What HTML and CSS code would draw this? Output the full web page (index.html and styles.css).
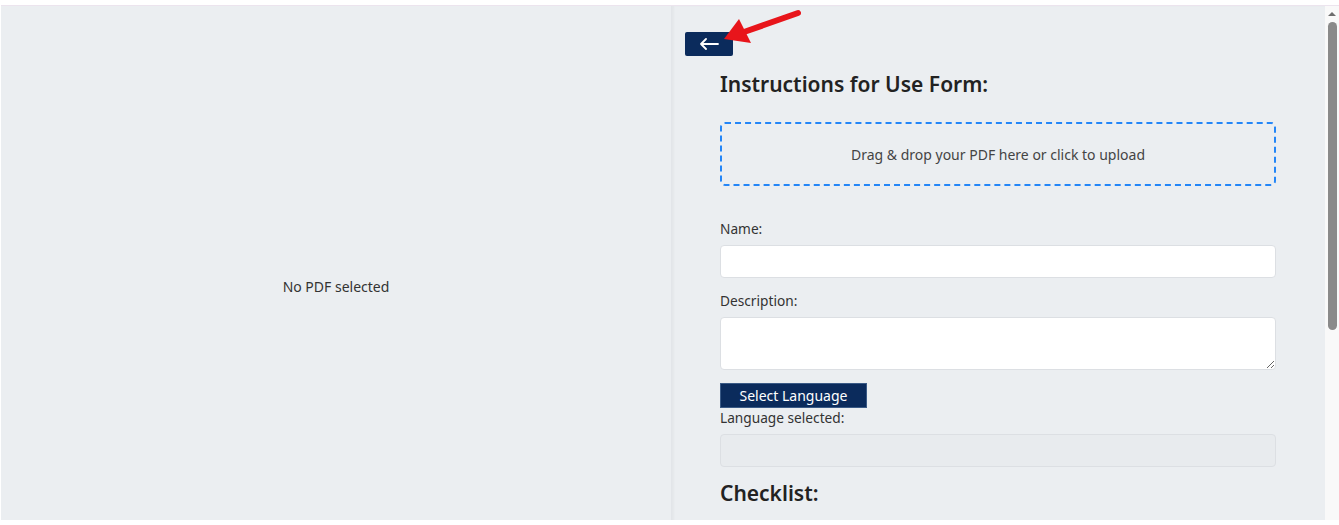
FILE: index.html
```html
<!DOCTYPE html>
<html lang="en">
<head>
<meta charset="utf-8">
<title>Instructions for Use Form</title>
<link rel="stylesheet" href="styles.css">
</head>
<body>
<div class="frame">
  <div class="scroller">
    <div class="layout">
      <section class="viewer">
        <p class="empty">No PDF selected</p>
      </section>
      <section class="editor">
        <button class="back" type="button" aria-label="Back">
          <svg width="20" height="12" viewBox="0 0 20 12" aria-hidden="true">
            <path d="M19 6H2M7 1L2 6l5 5" fill="none" stroke="#fff" stroke-width="1.8" stroke-linecap="round" stroke-linejoin="round"/>
          </svg>
        </button>
        <svg class="pointer" width="100" height="50" viewBox="0 0 100 50" aria-hidden="true">
          <path d="M86 7L32 26" stroke="#e8151b" stroke-width="6" stroke-linecap="round"/>
          <path d="M12 33L27 13L39 37Z" fill="#e8151b"/>
        </svg>
        <form class="form">
          <h2 class="title">Instructions for Use Form:</h2>
          <div class="drop">Drag &amp; drop your PDF here or click to upload</div>
          <label class="label" for="name">Name:</label>
          <input class="field" id="name" type="text">
          <label class="label" for="desc">Description:</label>
          <textarea class="field area" id="desc"></textarea>
          <button class="lang" type="button">Select Language</button>
          <label class="label tight" for="lang">Language selected:</label>
          <input class="field disabled" id="lang" type="text" disabled>
          <h2 class="title checklist">Checklist:</h2>
          <div class="spacer"></div>
        </form>
      </section>
    </div>
  </div>
  <div class="scrollbar" aria-hidden="true">
    <span class="arrow"></span>
    <span class="thumb"></span>
  </div>
</div>
</body>
</html>
```
FILE: styles.css
```css
html, body {
  margin: 0;
  padding: 0;
  background: #ffffff;
  font-family: "Noto Sans", "Open Sans", sans-serif;
  color: #333;
}
.frame {
  margin: 5px 0 0 1px;
  height: 515px;
  border-top: 1px solid #ece4ee;
  box-sizing: border-box;
  display: flex;
}
.scroller {
  flex: 1;
  overflow: hidden;
  background: #ebeef1;
}
.scrollbar {
  width: 14px;
  background: #f9f9f9;
  display: flex;
  flex-direction: column;
  align-items: center;
  padding-top: 6px;
  box-sizing: border-box;
}
.arrow {
  width: 0;
  height: 0;
  border-left: 4px solid transparent;
  border-right: 4px solid transparent;
  border-bottom: 4px solid #6e6e6e;
  margin-bottom: 6px;
}
.thumb {
  width: 9px;
  height: 308px;
  border-radius: 5px;
  background: #8a8a8a;
}
.layout {
  display: flex;
  min-height: 820px;
}
.viewer {
  width: 670px;
  height: 560px;
  display: flex;
  align-items: center;
  justify-content: center;
}
.empty {
  margin: 0;
  font-size: 14px;
  color: #333;
}
.editor {
  position: relative;
  flex: 1;
  border-left: 1px solid #e2e5e9;
  box-shadow: inset 2px 0 2px rgba(0,0,0,0.03);
  padding: 26px 0 0 13px;
}
.back {
  display: flex;
  align-items: center;
  justify-content: center;
  width: 48px;
  height: 24px;
  background: #0b2b5c;
  border: none;
  border-radius: 2px;
  padding: 0;
}
.pointer {
  position: absolute;
  left: 40px;
  top: 0;
}
.form {
  display: flex;
  flex-direction: column;
  padding: 0 49px 0 35px;
}
.title {
  margin: 14px 0 24px;
  font-size: 21px;
  font-weight: 600;
  color: #222;
  line-height: 28px;
}
.drop {
  height: 64px;
  border: 2px dashed #2486f7;
  border-radius: 5px;
  box-sizing: border-box;
  display: flex;
  align-items: center;
  justify-content: center;
  font-size: 14px;
  color: #444;
  margin-bottom: 33px;
}
.label {
  font-size: 13.7px;
  color: #333;
  line-height: 19px;
  margin-bottom: 7px;
}
.field {
  height: 33px;
  box-sizing: border-box;
  border: 1px solid #dcdfe3;
  border-radius: 4px;
  background: #fff;
  margin: 0 0 13px;
  font: inherit;
}
.area {
  height: 53px;
  resize: vertical;
}
.lang {
  align-self: flex-start;
  width: 147px;
  height: 25px;
  background: #0b2b5c;
  color: #fff;
  border: 1px solid #3a5a86;
  border-radius: 0;
  font: inherit;
  font-size: 14px;
  padding: 0;
}
.tight {
  margin-bottom: 7px;
}
.disabled {
  background: #e8ebee;
  margin-bottom: 12px;
}
.checklist {
  margin: 0;
}
.spacer {
  height: 300px;
}
```
